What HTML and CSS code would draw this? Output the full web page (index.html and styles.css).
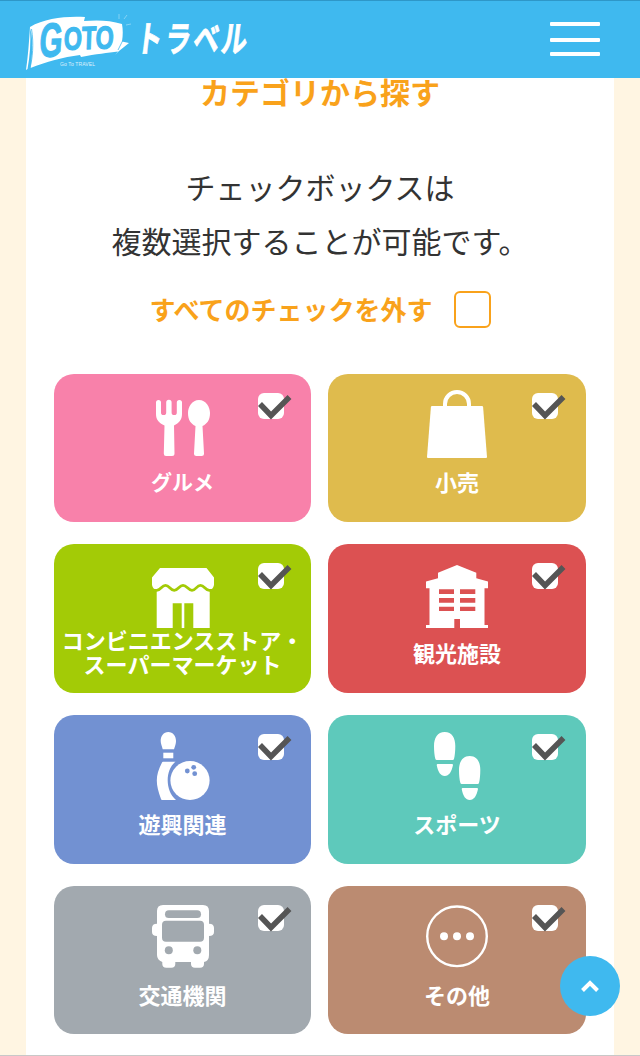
FILE: index.html
```
<!DOCTYPE html>
<html lang="ja">

<head>
    <meta charset="UTF-8">
    <title>Go To トラベル</title>
    <link rel="stylesheet" href="styles.css">
</head>

<body>
    <header class="header">
        <svg class="logo" viewBox="0 0 230 64" role="img" aria-label="Go To トラベル">
            <!-- 旗 -->
            <path fill="#fff" d="M4 19 C3 34 2 48 0 62 L1.500 61 C4 48 5 34 4 20 L5.500 26 C7 38 6 50 4.500 60 C20 54 37 49 54 47 L55 49 C70 46 82 45 92 43.500 L89 47 L93 43 L103 35 L96 33.500 C97 27 97 22 96 16 C84 12 70 12 58 13 L59 9 C40 8 19 10 4 19 Z" />
            <path fill="none" stroke="#3fb9ef" stroke-width="0.800" d="M92 42 L97 32M5.500 21C8 36 6.500 50 4 60" />
            <path fill="none" stroke="#fff" stroke-width="0.600" opacity="0.600" d="M93 6V11M98 11L101 7M100 17L105 16" />
            <text class="logo-goto" transform="translate(12.500 49) rotate(-2) skewX(-6)" font-size="48" textLength="23" lengthAdjust="spacingAndGlyphs">G</text>
            <text class="logo-goto" transform="translate(37.500 42) rotate(-2) skewX(-4)" font-size="32" textLength="50" lengthAdjust="spacingAndGlyphs">OTO</text>
            <text class="logo-sub" x="34" y="58" textLength="35">Go To TRAVEL</text>
            <text class="logo-travel" transform="translate(104 44) skewX(-7) scale(0.720 1)" x="7 47 86 125">トラベル</text>
        </svg>
        <div class="menu">
            <span></span>
            <span></span>
            <span></span>
        </div>
    </header>

    <main class="content">
        <h2 class="title">カテゴリから探す</h2>
        <p class="lead">チェックボックスは<br>複数選択することが可能です。</p>
        <div class="uncheck">
            <span>すべてのチェックを外す</span>
            <span class="uncheck-box"></span>
        </div>

        <div class="category-list">
            <div class="category gourmet">
                <svg class="icon" viewBox="0 0 64 72">
                    <path d="M5 12.500a2.500 2.500 0 0 1 5 0V22.500a2.600 2.600 0 0 0 5.200 0V12.500a2.700 2.700 0 0 1 5.400 0V22.500a2.600 2.600 0 0 0 5.200 0V12.500a2.600 2.600 0 0 1 5.200 0V24C31 30 28 33 23 35.500L23.500 63.500Q23.500 66 21 66H15Q12.800 66 12.800 63.500L13.500 35.500C8 33 5 30 5 24Z" />
                    <path d="M48 10C55 10 59 17 59 23C59 30 56 34 51.500 36L53 63.500Q53 66 50.500 66H45.500Q43 66 43 63.500L44.500 36C40 34 37 30 37 23C37 17 41 10 48 10Z" />
                </svg>
                <p class="label">グルメ</p>
                <span class="check"><svg viewBox="0 0 36 30"><path d="M2 11L13 22.500L31.500 4" /></svg></span>
            </div>
            <div class="category retail">
                <svg class="icon" viewBox="0 0 64 72">
                    <path class="line" stroke-width="4" d="M20 18V14a12 12 0 0 1 24 0V18" />
                    <path d="M7 16H57Q58 16 58.100 17L62 67Q62 68 61 68H3Q2 68 2 67L5.900 17Q6 16 7 16Z" />
                </svg>
                <p class="label">小売</p>
                <span class="check"><svg viewBox="0 0 36 30"><path d="M2 11L13 22.500L31.500 4" /></svg></span>
            </div>
            <div class="category store">
                <svg class="icon" viewBox="0 0 64 72">
                    <path d="M9 8H55.500L63 17.500V25Q62 29.500 58.700 29.500V68H42.300V43.300H33.300V68H30.700V43.300H21.700V68H5.700V29.500Q2 29.500 1 25V17.500Z" />
                    <path class="cut-line" d="M2 30.300H5.700C10 30.300 10.500 25.300 14.500 25.300S19 30.300 23.200 30.300S28 25.300 32 25.300S37 30.300 41 30.300S45.500 25.300 49.500 25.300S54 30.300 58.300 30.300H62" />
                </svg>
                <p class="label">コンビニエンスストア・<br>スーパーマーケット</p>
                <span class="check"><svg viewBox="0 0 36 30"><path d="M2 11L13 22.500L31.500 4" /></svg></span>
            </div>
            <div class="category sightseeing">
                <svg class="icon" viewBox="0 0 64 72">
                    <path d="M32 5L51.300 12.700V18.300L63 21.500V28.300H59.500V65H63V68H35V59H29.300V68H1V65H4.500V28.300H1V21.500L13 18.300V12.700Z" />
                    <path class="cut" d="M14 29.300H29V34H14ZM35 29.300H50.300V34H35ZM14 38H29V42.700H14ZM35 38H50.300V42.700H35ZM14 46.700H29V51H14ZM35 46.700H50.300V51H35Z" />
                </svg>
                <p class="label">観光施設</p>
                <span class="check"><svg viewBox="0 0 36 30"><path d="M2 11L13 22.500L31.500 4" /></svg></span>
            </div>
            <div class="category amusement">
                <svg class="icon" viewBox="0 0 64 72">
                    <path d="M17.300 1C22 1 25 5 25 10C25 13 24 15 23 18.300H11.700C11 15 9.700 13 9.700 10C9.700 5 12.500 1 17.300 1Z" />
                    <path d="M12.300 21.700H22.300V27.300H12.300Z" />
                    <path d="M12 30.700H24.500C14 39 14 60 25 69H11Q10.300 69 10 68C4.500 53 4 45 11 31.500Q11.300 30.700 12 30.700Z" />
                    <circle cx="39" cy="49.500" r="19.600" />
                    <g class="cut">
                        <circle cx="36.300" cy="40" r="2.400" />
                        <circle cx="42.700" cy="36.300" r="2.400" />
                        <circle cx="43.700" cy="42.700" r="2.400" />
                    </g>
                </svg>
                <p class="label">遊興関連</p>
                <span class="check"><svg viewBox="0 0 36 30"><path d="M2 11L13 22.500L31.500 4" /></svg></span>
            </div>
            <div class="category sports">
                <svg class="icon" viewBox="0 0 64 72">
                    <path d="M19.700 1C27 1 30.300 7 30.300 15C30.300 20 29.800 25 29 28Q28.700 29 27.700 29H11.700Q10.700 29 10.400 28C9.500 25 9 20 9 15C9 7 12.500 1 19.700 1ZM12.700 33H27Q28 33 28 34C26.500 41 24 45 19.800 45S13 41 11.700 34Q11.700 33 12.700 33Z" />
                    <path transform="translate(25 24)" d="M19.700 1C27 1 30.300 7 30.300 15C30.300 20 29.800 25 29 28Q28.700 29 27.700 29H11.700Q10.700 29 10.400 28C9.500 25 9 20 9 15C9 7 12.500 1 19.700 1ZM12.700 33H27Q28 33 28 34C26.500 41 24 45 19.800 45S13 41 11.700 34Q11.700 33 12.700 33Z" />
                </svg>
                <p class="label">スポーツ</p>
                <span class="check"><svg viewBox="0 0 36 30"><path d="M2 11L13 22.500L31.500 4" /></svg></span>
            </div>
            <div class="category transport">
                <svg class="icon" viewBox="0 0 64 72">
                    <path d="M12 3H52Q58 3 58 9V21.700Q63 21.700 63 26V30Q63 34 58 34V53Q58 59 53 60V62Q53 65.700 49 65.700H44Q40 65.700 40 62V60H24.300V62Q24.300 65.700 20.300 65.700H15.300Q11.300 65.700 11.300 62V60Q6 58 6 53V34Q1 34 1 30V26Q1 21.700 6 21.700V9Q6 3 12 3Z" />
                    <g class="cut">
                        <rect x="14" y="8.300" width="36" height="7.700" rx="3.850" />
                        <rect x="11" y="18.700" width="42" height="21" rx="4" />
                        <circle cx="17.800" cy="48.300" r="4" />
                        <circle cx="46.300" cy="48.300" r="4" />
                    </g>
                </svg>
                <p class="label">交通機関</p>
                <span class="check"><svg viewBox="0 0 36 30"><path d="M2 11L13 22.500L31.500 4" /></svg></span>
            </div>
            <div class="category other">
                <svg class="icon" viewBox="0 0 64 72">
                    <circle class="line" stroke-width="2.400" cx="32" cy="34.300" r="29.800" />
                    <circle cx="19" cy="34.300" r="4" />
                    <circle cx="32" cy="34.300" r="4" />
                    <circle cx="45" cy="34.300" r="4" />
                </svg>
                <p class="label">その他</p>
                <span class="check"><svg viewBox="0 0 36 30"><path d="M2 11L13 22.500L31.500 4" /></svg></span>
            </div>
        </div>
    </main>

    <a class="page-top" href="#">
        <svg viewBox="0 0 20 14"><path d="M2.500 11.500L10 4L17.500 11.500" /></svg>
    </a>
</body>

</html>
```
FILE: styles.css
```
* {
    box-sizing: border-box;
}

body {
    margin: 0;
    height: 1056px;
    overflow: hidden;
    background: #fff5e2;
    border-bottom: 1px solid #c8c8c8;
    color: #333;
    font-family: "Noto Sans CJK JP", sans-serif;
}

h2,
p {
    margin: 0;
}

.header {
    display: flex;
    justify-content: space-between;
    align-items: flex-start;
    height: 78px;
    padding: 7px 40px 0 26px;
    background: #3fb9ef;
    border-top: 1px solid #2e97c8;
}

.logo {
    width: 230px;
    height: 64px;
    overflow: visible;
}

.logo-goto {
    fill: #3fb9ef;
    stroke: #3fb9ef;
    stroke-width: 1.200px;
    font-family: "Liberation Sans", sans-serif;
    font-weight: bold;
}

.logo-sub {
    fill: #fff;
    font-family: "Liberation Sans", sans-serif;
    font-size: 5px;
    opacity: 0.8;
}

.logo-travel {
    fill: #fff;
    stroke: #fff;
    stroke-width: 0.800px;
    font-size: 36px;
    font-weight: 700;
}

.menu {
    display: flex;
    flex-direction: column;
    justify-content: space-between;
    width: 50px;
    height: 34px;
    margin-top: 14px;
}

.menu span {
    height: 4px;
    border-radius: 1px;
    background: #fff;
}

.menu span:nth-child(2) {
    margin-top: 1px;
}

.content {
    height: 977px;
    margin: 0 26px;
    padding: 0 28px;
    background: #fff;
    text-align: center;
}

.title {
    color: #f9a21b;
    font-size: 30px;
    font-weight: 700;
    line-height: 26px;
}

.lead {
    margin-top: 55px;
    font-size: 30px;
    line-height: 54px;
}

.uncheck {
    display: flex;
    justify-content: center;
    align-items: center;
    gap: 21px;
    height: 37px;
    margin-top: 24px;
    color: #f9a21b;
    font-size: 26px;
    font-weight: 700;
    line-height: 33px;
}

.uncheck span:first-child {
    padding-bottom: 3px;
}

.uncheck-box {
    width: 37px;
    height: 37px;
    border: 2px solid #f9a21b;
    border-radius: 6px;
}

.category-list {
    display: grid;
    grid-template-columns: 257px 258px;
    grid-auto-rows: 148.700px;
    gap: 22px 17px;
    margin-top: 45.700px;
}

.category {
    position: relative;
    display: flex;
    flex-direction: column;
    align-items: center;
    padding-top: 16px;
    border-radius: 20px;
    background: var(--color);
}

.gourmet { --color: #f881aa; }
.retail { --color: #dfbb4d; }
.store { --color: #a3cb06; }
.sightseeing { --color: #dc5152; }
.amusement { --color: #7291d2; }
.sports { --color: #5ec9bb; }
.transport { --color: #a2a9af; }
.other { --color: #bb8b71; }

.icon {
    width: 64px;
    height: 72px;
    fill: #fff;
}

.icon .cut {
    fill: var(--color);
}

.icon .line {
    fill: none;
    stroke: #fff;
}

.icon .cut-line {
    fill: none;
    stroke: var(--color);
    stroke-width: 2.700px;
}

.label {
    margin-top: 8px;
    color: #fff;
    font-size: 22px;
    font-weight: 700;
    line-height: 24px;
    white-space: nowrap;
}

.gourmet .label,
.retail .label {
    margin-top: 7px;
}

.gourmet .label {
    font-size: 21px;
}

.store .label {
    margin-top: -5px;
}

.check {
    position: absolute;
    top: 19px;
    left: 204px;
    width: 26px;
    height: 26px;
    border-radius: 6px;
    background: #fff;
}

.check svg {
    display: block;
    width: 36px;
    height: 30px;
    fill: none;
    stroke: #555;
    stroke-width: 5.500px;
}

.page-top {
    position: fixed;
    right: 20px;
    bottom: 40px;
    display: flex;
    justify-content: center;
    align-items: center;
    width: 60px;
    height: 60px;
    border-radius: 50%;
    background: #3fb9ef;
}

.page-top svg {
    width: 20px;
    height: 14px;
    fill: none;
    stroke: #fff;
    stroke-width: 4px;
}
```
